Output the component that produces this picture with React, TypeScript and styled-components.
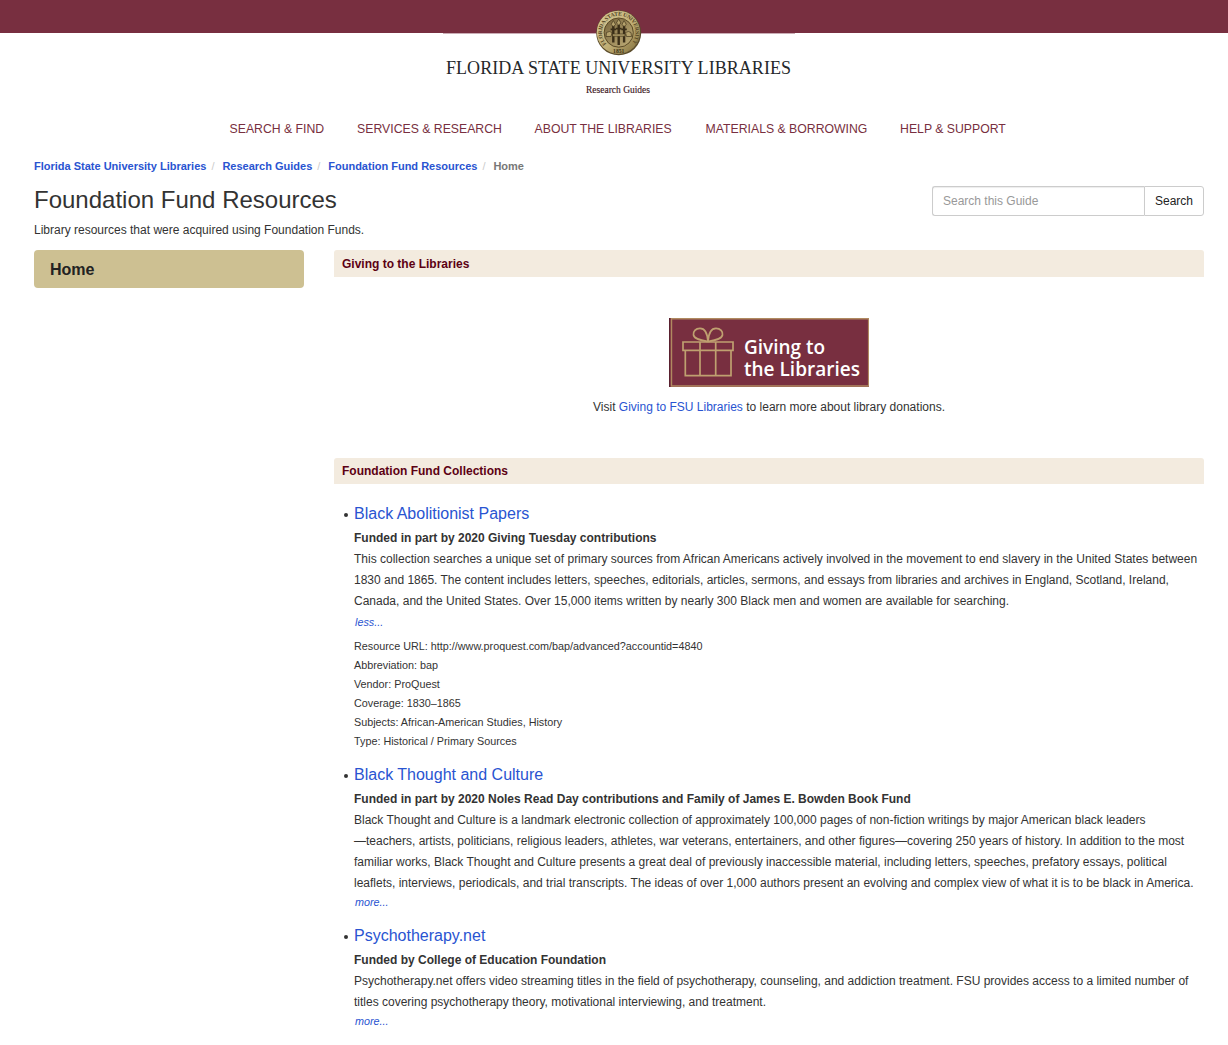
import React from "react";
import styled, { createGlobalStyle } from "styled-components";

const Global = createGlobalStyle`
  * { box-sizing: border-box; }
  body {
    margin: 0;
    background: #fff;
    color: #333;
    font-family: "Liberation Sans", Arial, Helvetica, sans-serif;
    font-size: 12px;
  }
`;

const Page = styled.div`
  width: 1228px;
  height: 1045px;
  overflow: hidden;
`;

const Header = styled.header`
  display: flex;
  justify-content: center;
  height: 116px;
  padding-left: 9px;
  background: linear-gradient(#782f40 33px, #fff 33px);
`;

const Nav = styled.nav`
  display: flex;
  gap: 33px;
  height: 25px;
  padding-left: 229.6px;
  line-height: 26px;
`;

const NavLink = styled.a<{ $w: number }>`
  width: ${(p) => p.$w}px;
  color: #782f40;
  font-size: 12.25px;
  white-space: nowrap;
`;

const Crumbs = styled.div`
  display: flex;
  height: 20px;
  margin: 15px 34px 0;
  font-size: 11px;
  font-weight: 700;
  line-height: 20px;
`;

const Crumb = styled.span<{ $current?: boolean }>`
  color: ${(p) => (p.$current ? "#777" : "#2954d1")};
`;

const Slash = styled.span`
  width: 16px;
  padding-left: 5px;
  color: #ccc;
  font-weight: 400;
`;

const Intro = styled.div`
  display: flex;
  justify-content: space-between;
  height: 74px;
  padding: 10px 24px 0 34px;
`;

const Title = styled.h1`
  margin: 0;
  font-size: 24px;
  font-weight: 400;
  line-height: 28px;
`;

const Lead = styled.p`
  margin: 6px 0 0;
  line-height: 20px;
`;

const SearchBox = styled.form`
  display: flex;
  width: 272px;
  height: 30px;
`;

const SearchInput = styled.input`
  width: 212px;
  padding: 0 10px;
  border: 1px solid #ccc;
  border-right: 0;
  border-radius: 3px 0 0 3px;
  box-shadow: inset 0 1px 1px rgba(0, 0, 0, 0.075);
  font: inherit;
  &::placeholder { color: #999; opacity: 1; }
`;

const SearchButton = styled.button`
  flex: 1;
  padding: 0;
  border: 1px solid #ccc;
  border-radius: 0 3px 3px 0;
  background: #fff;
  color: #222;
  font: inherit;
`;

const Columns = styled.div`
  display: grid;
  grid-template-columns: 270px 870px;
  gap: 30px;
  padding-left: 34px;
`;

const Tab = styled.a`
  display: block;
  height: 38px;
  padding-left: 16px;
  border-radius: 4px;
  background: #cdc092;
  color: #222;
  font-size: 16px;
  font-weight: 700;
  line-height: 39px;
`;

const BoxTitle = styled.h2<{ $h: number }>`
  height: ${(p) => p.$h}px;
  margin: 0;
  padding-left: 8px;
  border-radius: 3px 3px 0 0;
  background: #f3ebdf;
  color: #5c0013;
  font-size: 12px;
  line-height: ${(p) => p.$h + 1}px;
`;

const Giving = styled.div`
  display: flex;
  flex-direction: column;
  align-items: center;
  height: 181px;
  padding-top: 41px;
`;

const Visit = styled.p`
  margin: 10px 0 0;
  line-height: 21px;
`;

const Link = styled.a`
  color: #2954d1;
`;

const List = styled.ul`
  margin: 0;
  padding: 16px 0 0 20px;
  list-style: none;
`;

const Item = styled.li`
  margin-bottom: 10px;
`;

const ItemHead = styled.div`
  display: flex;
  align-items: center;
  height: 28px;
  margin-left: -10px;
  &::before {
    content: "";
    width: 4px;
    height: 4px;
    margin: 2px 6px 0 0;
    border-radius: 50%;
    background: #333;
  }
`;

const ItemLink = styled.a`
  color: #2954d1;
  font-size: 16px;
  line-height: 27px;
  padding-bottom: 1px;
`;

const Line = styled.div<{ $bold?: boolean }>`
  height: 21px;
  font-weight: ${(p) => (p.$bold ? 700 : 400)};
  line-height: 21px;
  white-space: nowrap;
`;

const Toggle = styled.a<{ $h: number }>`
  display: block;
  height: ${(p) => p.$h - 1}px;
  padding-left: 1px;
  color: #2954d1;
  font-size: 10.8px;
  font-style: italic;
  line-height: ${(p) => p.$h - 2}px;
`;

const Details = styled.div`
  padding-top: 4px;
  font-size: 10.8px;
  line-height: 19px;
`;

const SEAL_TEXT = "FLORIDA STATE UNIVERSITY";

const Logo = () => (
  <svg width="352" height="104" viewBox="0 0 352 104">
    <defs>
      <linearGradient id="gold" x1="0" y1="0" x2="1" y2="1">
        <stop offset="0" stopColor="#d9cc9a" />
        <stop offset=".55" stopColor="#c0ae75" />
        <stop offset="1" stopColor="#7d6a38" />
      </linearGradient>
      <linearGradient id="core" x1="0" y1="0" x2="1" y2="1">
        <stop offset="0" stopColor="#75623a" />
        <stop offset="1" stopColor="#c2b07a" />
      </linearGradient>
      <path id="ring" d="M163.5 44 A16.8 16.8 0 1 1 188 44" />
    </defs>
    <path d="M0 33.4H352" stroke="#782f40" strokeOpacity=".55" strokeWidth=".8" />
    <circle cx="175.7" cy="32.8" r="22.5" fill="#5b4c2b" />
    <circle cx="175.4" cy="32.3" r="21.6" fill="url(#gold)" />
    <circle cx="175.7" cy="32.6" r="14.6" fill="url(#core)" stroke="#5b4a26" />
    <text fill="#51431f" fontFamily="Liberation Serif, serif" fontWeight="700" fontSize="5.6">
      <textPath href="#ring" textLength="76">{SEAL_TEXT}</textPath>
    </text>
    <text x="175.7" y="52.6" textAnchor="middle" fill="#3d3218" fontFamily="Liberation Serif, serif" fontWeight="700" fontSize="5.6">1851</text>
    <g stroke="#3a2e18" strokeWidth="2.4" fill="none">
      <path d="M170.3 26V42.5M175.7 25V45M181.1 26V42.5" />
      <path d="M167.6 29.4H173M173 28.6H178.4M178.4 29.4H183.8" strokeWidth="1.6" />
    </g>
    <g fill="#b5a26c" stroke="#43361c" strokeWidth=".7">
      <path d="M170.3 20.5l2.2 4-2.2 2-2.2-2zM175.7 19l2.3 4-2.3 2-2.3-2zM181.1 20.5l2.2 4-2.2 2-2.2-2z" />
      <path d="M163.5 32.5q3-2 5.5 0l-1 4h-5zM182.5 32.5q3-2 5.5 0l.5 4h-5z" />
      <path d="M169.5 34h12.5v2.2h-12.5z" />
    </g>
    <text x="3" y="74" textLength="345" lengthAdjust="spacing" fontFamily="Liberation Serif, serif" fontSize="18" fill="#25282b">FLORIDA STATE UNIVERSITY LIBRARIES</text>
    <text x="143" y="93" textLength="64" lengthAdjust="spacingAndGlyphs" fontFamily="Liberation Serif, serif" fontSize="10.6" fill="#3d1723" stroke="#3d1723" strokeWidth=".15">Research Guides</text>
  </svg>
);

const GivingBanner = () => (
  <svg width="200" height="69" viewBox="0 0 200 69">
    <rect width="200" height="69" fill="#782f40" />
    <path d="M200 .8H2.5V68H200M199.6 1V68" fill="none" stroke="#b08a60" strokeWidth="1.4" />
    <path d="M.4 0V69" stroke="#4d1c2a" strokeWidth=".8" />
    <g fill="none" stroke="#bfa070" strokeWidth="1.7">
      <path d="M14 24H64V32.3H14zM16.3 32.3V57.7H62V32.3M31 24V57.7M46.7 24V57.7" />
      <path d="M39 23.5C38.5 16 36 10.3 31 10.3C26.5 10.3 24 13.5 24.5 17C25.5 21.5 33 22.5 39 23.5C45 22.5 52.5 21.5 53.5 17C54 13.5 51.5 10.3 47 10.3C42 10.3 39.5 16 39 23.5Z" />
    </g>
    <text fill="#fff" fontFamily="Open Sans, sans-serif" fontWeight="600" fontSize="19">
      <tspan x="75" y="35.5" textLength="81" lengthAdjust="spacingAndGlyphs">Giving to</tspan>
      <tspan x="75" y="58.3" textLength="116" lengthAdjust="spacingAndGlyphs">the Libraries</tspan>
    </text>
  </svg>
);

const menu: [string, number][] = [
  ["SEARCH & FIND", 94.5],
  ["SERVICES & RESEARCH", 144.5],
  ["ABOUT THE LIBRARIES", 138],
  ["MATERIALS & BORROWING", 161.5],
  ["HELP & SUPPORT", 107],
];

const items = [
  {
    title: "Black Abolitionist Papers",
    fund: "Funded in part by 2020 Giving Tuesday contributions",
    lines: [
      "This collection searches a unique set of primary sources from African Americans actively involved in the movement to end slavery in the United States between",
      "1830 and 1865. The content includes letters, speeches, editorials, articles, sermons, and essays from libraries and archives in England, Scotland, Ireland,",
      "Canada, and the United States. Over 15,000 items written by nearly 300 Black men and women are available for searching.",
    ],
    details: [
      "Resource URL: http://www.proquest.com/bap/advanced?accountid=4840",
      "Abbreviation: bap",
      "Vendor: ProQuest",
      "Coverage: 1830–1865",
      "Subjects: African-American Studies, History",
      "Type: Historical / Primary Sources",
    ],
  },
  {
    title: "Black Thought and Culture",
    fund: "Funded in part by 2020 Noles Read Day contributions and Family of James E. Bowden Book Fund",
    lines: [
      "Black Thought and Culture is a landmark electronic collection of approximately 100,000 pages of non-fiction writings by major American black leaders",
      "—teachers, artists, politicians, religious leaders, athletes, war veterans, entertainers, and other figures—covering 250 years of history. In addition to the most",
      "familiar works, Black Thought and Culture presents a great deal of previously inaccessible material, including letters, speeches, prefatory essays, political",
      "leaflets, interviews, periodicals, and trial transcripts. The ideas of over 1,000 authors present an evolving and complex view of what it is to be black in America.",
    ],
  },
  {
    title: "Psychotherapy.net",
    fund: "Funded by College of Education Foundation",
    lines: [
      "Psychotherapy.net offers video streaming titles in the field of psychotherapy, counseling, and addiction treatment. FSU provides access to a limited number of",
      "titles covering psychotherapy theory, motivational interviewing, and treatment.",
    ],
  },
];

export default function App() {
  return (
    <Page>
      <Global />
      <Header><Logo /></Header>
      <Nav>
        {menu.map(([label, w]) => <NavLink key={label} $w={w}>{label}</NavLink>)}
      </Nav>
      <Crumbs>
        <Crumb>Florida State University Libraries</Crumb><Slash>/</Slash>
        <Crumb>Research Guides</Crumb><Slash>/</Slash>
        <Crumb>Foundation Fund Resources</Crumb><Slash>/</Slash>
        <Crumb $current>Home</Crumb>
      </Crumbs>
      <Intro>
        <div>
          <Title>Foundation Fund Resources</Title>
          <Lead>Library resources that were acquired using Foundation Funds.</Lead>
        </div>
        <SearchBox>
          <SearchInput placeholder="Search this Guide" />
          <SearchButton type="button">Search</SearchButton>
        </SearchBox>
      </Intro>
      <Columns>
        <aside><Tab>Home</Tab></aside>
        <main>
          <BoxTitle $h={27}>Giving to the Libraries</BoxTitle>
          <Giving>
            <GivingBanner />
            <Visit>Visit <Link>Giving to FSU Libraries</Link> to learn more about library donations.</Visit>
          </Giving>
          <BoxTitle $h={26}>Foundation Fund Collections</BoxTitle>
          <List>
            {items.map((item) => (
              <Item key={item.title}>
                <ItemHead><ItemLink>{item.title}</ItemLink></ItemHead>
                <Line $bold>{item.fund}</Line>
                {item.lines.map((line) => <Line key={line}>{line}</Line>)}
                <Toggle $h={item.details ? 22 : 19}>{item.details ? "less..." : "more..."}</Toggle>
                {item.details && (
                  <Details>{item.details.map((d) => <div key={d}>{d}</div>)}</Details>
                )}
              </Item>
            ))}
          </List>
        </main>
      </Columns>
    </Page>
  );
}
